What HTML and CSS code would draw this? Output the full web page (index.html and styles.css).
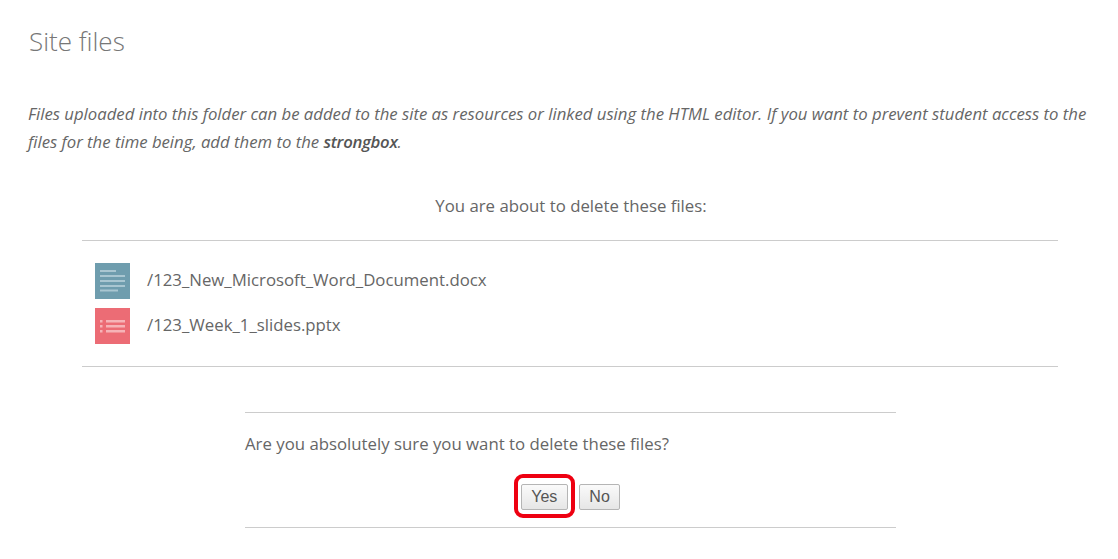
FILE: index.html
```html
<!DOCTYPE html>
<html lang="en">
<head>
<meta charset="utf-8">
<title>Site files</title>
<link rel="stylesheet" href="styles.css">
</head>
<body>
<main class="page">
  <h1 class="title">Site files</h1>
  <p class="intro">Files uploaded into this folder can be added to the site as resources or linked using the HTML editor. If you want to prevent student access to the files for the time being, add them to the <strong>strongbox</strong>.</p>
  <section class="files">
    <p class="files-lead">You are about to delete these files:</p>
    <ul class="file-list">
      <li class="file">
        <svg class="icon" viewBox="0 0 35 36" width="35" height="36" aria-hidden="true">
          <rect width="35" height="36" fill="#6f9dae"/>
          <g fill="#a9c6d1">
            <rect x="5" y="7" width="16" height="2"/>
            <rect x="5" y="12" width="25" height="2"/>
            <rect x="5" y="17" width="25" height="2"/>
            <rect x="5" y="22" width="25" height="2"/>
            <rect x="5" y="26.5" width="18" height="2"/>
          </g>
        </svg>
        <span class="file-name">/123_New_Microsoft_Word_Document.docx</span>
      </li>
      <li class="file">
        <svg class="icon" viewBox="0 0 35 36" width="35" height="36" aria-hidden="true">
          <rect width="35" height="36" fill="#ec6c75"/>
          <g fill="#f6b3b7">
            <rect x="5" y="12" width="2.5" height="2.5"/>
            <rect x="5" y="17" width="2.5" height="2.5"/>
            <rect x="5" y="22" width="2.5" height="2.5"/>
            <rect x="11" y="12" width="19" height="2.5"/>
            <rect x="11" y="17" width="19" height="2.5"/>
            <rect x="11" y="22" width="19" height="2.5"/>
          </g>
        </svg>
        <span class="file-name">/123_Week_1_slides.pptx</span>
      </li>
    </ul>
  </section>
  <section class="confirm">
    <p class="question">Are you absolutely sure you want to delete these files?</p>
    <div class="actions">
      <span class="highlight"><button class="btn" type="button">Yes</button></span>
      <button class="btn" type="button">No</button>
    </div>
  </section>
</main>
</body>
</html>
```
FILE: styles.css
```css
* { box-sizing: border-box; }
html, body { margin: 0; background: #fff; }
body {
  font-family: "Open Sans", "Liberation Sans", sans-serif;
  color: #666;
  font-size: 16.8px;
  overflow: hidden;
}
.page { width: 1118px; height: 559px; padding: 22px 28px 0 28px; }
.title {
  margin: 0 0 0 1px;
  font-size: 26px;
  line-height: 38px;
  font-weight: 300;
  color: #777;
}
.intro {
  margin: 40px -6px 0 0;
  font-size: 16.73px;
  font-style: italic;
  line-height: 28px;
}
.intro strong { font-weight: 600; letter-spacing: -0.3px; color: #555; }
.files {
  margin: 0 32px 0 54px;
  padding-top: 36px;
}
.files-lead {
  margin: 0;
  padding-left: 2px;
  text-align: center;
  line-height: 28px;
  height: 49px;
  border-bottom: 1px solid #ccc;
}
.file-list {
  list-style: none;
  margin: 0;
  padding: 22px 13px 22px;
  border-bottom: 1px solid #ccc;
  display: flex;
  flex-direction: column;
  gap: 9px;
}
.file { display: flex; align-items: center; gap: 17px; height: 36px; }
.file-name { padding-bottom: 4px; }
.icon { display: block; flex: none; }
.confirm {
  width: 651px;
  margin: 45px 0 0 217px;
  border-top: 1px solid #ccc;
  border-bottom: 1px solid #ccc;
  height: 116px;
}
.question { margin: 0; padding-top: 17px; line-height: 28px; }
.actions {
  display: flex;
  justify-content: center;
  align-items: center;
  gap: 4px;
  margin: 26px 0 0 -7px;
}
.highlight {
  display: block;
  padding: 6px 3px 4px;
  border: 4px solid #ee0011;
  border-radius: 9px;
  margin: -10px 0 -8px;
  line-height: 0;
}
.highlight .btn { display: block; }
.btn {
  font-family: "Liberation Sans", Arial, sans-serif;
  font-size: 16px;
  color: #555;
  height: 26px;
  padding: 0 9.5px;
  background: linear-gradient(#fafafa, #e6e6e6);
  border: 1px solid #b5b5b5;
  border-radius: 2px;
}
```
